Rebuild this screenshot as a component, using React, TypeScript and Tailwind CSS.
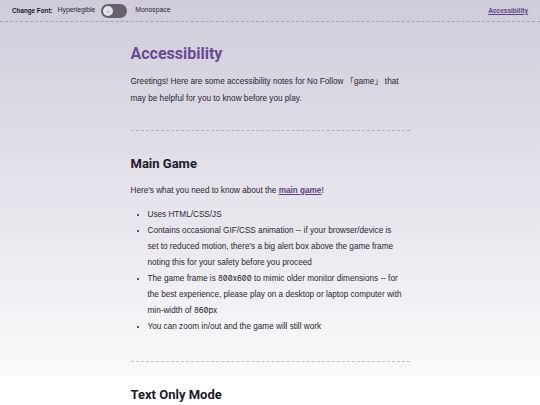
import React from "react";

export default function App() {
  const body = { fontFamily: '"Liberation Sans", Arial, "Noto Sans CJK JP", sans-serif' };
  const head = { fontFamily: 'Roboto, "Noto Sans", sans-serif' };
  const num = "font-['Inter',sans-serif] [font-feature-settings:'zero','calt'_0] text-[7.8px] leading-[10px]";
  return (
    <div
      className="min-h-[405px] bg-white bg-[linear-gradient(#d0cbda,#fafafb)] bg-no-repeat bg-[length:100%_376px] text-[#2a2633]"
      style={body}
    >
      <header className="h-[22px] flex items-center justify-between px-[12px] border-b border-dashed border-[#a9a3b3]">
        <div className="flex items-center">
          <span className="font-bold text-[6.3px] text-[#1d1a24]">Change Font:</span>
          <span className="ml-[5px] text-[6.8px] text-[#2a2633]">Hyperlegible</span>
          <div className="ml-[6px] w-[26px] h-[14px] rounded-full bg-[#66616c] flex items-center pl-[2px]">
            <div className="w-[10px] h-[10px] rounded-full bg-[#e4e1e8] flex items-center justify-center text-[6px] leading-none text-[#66616c]">
              ‹
            </div>
          </div>
          <span className="ml-[8px] text-[6.8px] text-[#2a2633]">Monospace</span>
        </div>
        <a className="text-[6.5px] text-[#5b3f82] underline font-bold">Accessibility</a>
      </header>

      <main className="w-[279px] mx-auto pt-[21px]">
        <h1 className="text-[16px] font-bold text-[#6a4a93] leading-[22px]" style={head}>
          Accessibility
        </h1>
        <p className="mt-[8px] text-[8.2px] leading-[17px]">
          Greetings! Here are some accessibility notes for No Follow 「game」 that may be helpful for you to know before you play.
        </p>
        <hr className="mt-[23px] border-0 border-t border-dashed border-[#b4afbb]" />

        <h2 className="mt-[23px] text-[13px] font-bold leading-[20px] text-[#1d1a2a]" style={head}>
          Main Game
        </h2>
        <p className="mt-[8px] text-[8.2px] leading-[17px]">
          Here's what you need to know about the{" "}
          <a className="text-[#5b3f82] font-bold underline">main game</a>!
        </p>
        <ul className="mt-[8px] mr-[5px] pl-[17px] list-disc text-[8.2px] leading-[16px]">
          <li>Uses HTML/CSS/JS</li>
          <li>
            Contains occasional GIF/CSS animation -- if your browser/device is set to reduced motion, there's a big alert box above the game frame noting this for your safety before you proceed
          </li>
          <li>
            The game frame is <span className={num}>800x600</span> to mimic older monitor dimensions -- for the best experience, please play on a desktop or laptop computer with min-width of <span className={num}>860px</span>
          </li>
          <li>You can zoom in/out and the game will still work</li>
        </ul>
        <hr className="mt-[26px] border-0 border-t border-dashed border-[#c4c0ca]" />

        <h2 className="mt-[23px] text-[13px] font-bold leading-[20px] text-[#1d1a2a]" style={head}>
          Text Only Mode
        </h2>
      </main>
    </div>
  );
}
